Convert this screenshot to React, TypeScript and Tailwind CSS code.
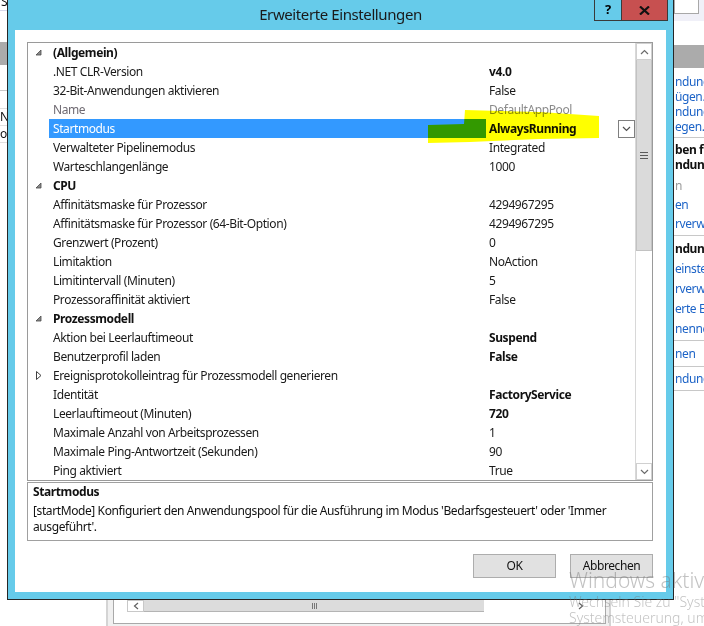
import React from 'react';

type Row =
  | { kind: 'group'; label: string }
  | { kind: 'prop'; label: string; value?: string; bold?: boolean; muted?: boolean; selected?: boolean; collapsed?: boolean };

const ROWS: Row[] = [
  { kind: 'group', label: '(Allgemein)' },
  { kind: 'prop', label: '.NET CLR-Version', value: 'v4.0', bold: true },
  { kind: 'prop', label: '32-Bit-Anwendungen aktivieren', value: 'False' },
  { kind: 'prop', label: 'Name', value: 'DefaultAppPool', muted: true },
  { kind: 'prop', label: 'Startmodus', value: 'AlwaysRunning', bold: true, selected: true },
  { kind: 'prop', label: 'Verwalteter Pipelinemodus', value: 'Integrated' },
  { kind: 'prop', label: 'Warteschlangenlänge', value: '1000' },
  { kind: 'group', label: 'CPU' },
  { kind: 'prop', label: 'Affinitätsmaske für Prozessor', value: '4294967295' },
  { kind: 'prop', label: 'Affinitätsmaske für Prozessor (64-Bit-Option)', value: '4294967295' },
  { kind: 'prop', label: 'Grenzwert (Prozent)', value: '0' },
  { kind: 'prop', label: 'Limitaktion', value: 'NoAction' },
  { kind: 'prop', label: 'Limitintervall (Minuten)', value: '5' },
  { kind: 'prop', label: 'Prozessoraffinität aktiviert', value: 'False' },
  { kind: 'group', label: 'Prozessmodell' },
  { kind: 'prop', label: 'Aktion bei Leerlauftimeout', value: 'Suspend', bold: true },
  { kind: 'prop', label: 'Benutzerprofil laden', value: 'False', bold: true },
  { kind: 'prop', label: 'Ereignisprotokolleintrag für Prozessmodell generieren', collapsed: true },
  { kind: 'prop', label: 'Identität', value: 'FactoryService', bold: true },
  { kind: 'prop', label: 'Leerlauftimeout (Minuten)', value: '720', bold: true },
  { kind: 'prop', label: 'Maximale Anzahl von Arbeitsprozessen', value: '1' },
  { kind: 'prop', label: 'Maximale Ping-Antwortzeit (Sekunden)', value: '90' },
  { kind: 'prop', label: 'Ping aktiviert', value: 'True' },
];

const RIGHT_LINKS = ['ndung', 'ügen...', 'ndung', 'egen...'];

function Expanded() {
  return (
    <svg width="7" height="7" viewBox="0 0 7 7">
      <polygon points="6,1 6,6 1,6" fill="#8a8a8a" stroke="#4a4a4a" strokeWidth="0.8" />
    </svg>
  );
}

function Collapsed() {
  return (
    <svg width="7" height="9" viewBox="0 0 7 9">
      <polygon points="1.5,0.5 6,4.5 1.5,8.5" fill="none" stroke="#404040" strokeWidth="1" />
    </svg>
  );
}

function Chevron({ up, color = '#6b6b6b' }: { up?: boolean; color?: string }) {
  return (
    <svg width="9" height="6" viewBox="0 0 9 6">
      <polyline points={up ? '1,5 4.5,1.5 8,5' : '1,1 4.5,4.5 8,1'} fill="none" stroke={color} strokeWidth="1.2" />
    </svg>
  );
}

function PropRow({ row }: { row: Row }) {
  if (row.kind === 'group') {
    return (
      <div className="flex h-[19px] items-center">
        <div className="w-[21px] flex justify-center">
          <Expanded />
        </div>
        <div className="pl-[4px] font-bold text-[#111]">{row.label}</div>
      </div>
    );
  }
  return (
    <div className="relative flex h-[19px] items-center">
      <div className="w-[21px] flex justify-center">{row.collapsed && <Collapsed />}</div>
      <div
        className={
          row.selected
            ? 'w-[437px] h-full flex items-center pl-[4px] bg-[#3399ff] text-white whitespace-nowrap'
            : row.muted
            ? 'w-[437px] pl-[4px] text-[#6f6a72] whitespace-nowrap'
            : 'w-[437px] pl-[4px] text-[#1a1a1a] whitespace-nowrap'
        }
      >
        {row.label}
      </div>
      <div
        className={
          row.muted
            ? 'flex-1 pl-[3px] text-[#8a8a8a] whitespace-nowrap'
            : row.bold
            ? 'flex-1 pl-[3px] font-bold text-[#111] whitespace-nowrap'
            : 'flex-1 pl-[3px] text-[#1a1a1a] whitespace-nowrap'
        }
      >
        {row.value}
      </div>
      {row.selected && (
        <div className="absolute right-0 top-[1px] w-[17px] h-[18px] bg-white border border-[#7f7f7f] flex items-center justify-center">
          <Chevron color="#505050" />
        </div>
      )}
    </div>
  );
}

function RightStrip() {
  return (
    <div className="absolute left-[674px] top-0 w-[40px] h-[626px] bg-white text-[12px] leading-[15px]">
      <div className="h-[21px] bg-[#f0f0f8]">
        <div className="w-[25px] h-[14px] bg-white border border-[#a8a8a8] border-t-0" />
      </div>
      <div className="mt-[24px] h-[23px] bg-[#ababab]" />
      <div className="pt-[6px] pl-[1px] text-[#1c63c7]">
        {RIGHT_LINKS.map((t, i) => (
          <div key={i} className="whitespace-nowrap">{t}</div>
        ))}
      </div>
      <div className="mt-[3px] h-px bg-[#c8c8c8]" />
      <div className="pt-[4px] pl-[1px] font-bold text-[#111] whitespace-nowrap">
        <div>ben für</div>
        <div>ndung</div>
      </div>
      <div className="pl-[1px] leading-[19px] pt-[4px]">
        <div className="text-[#9a9a9a]">n</div>
        <div className="text-[#1c63c7]">en</div>
        <div className="text-[#1c63c7]">rverw</div>
      </div>
      <div className="mt-[2px] h-px bg-[#c8c8c8]" />
      <div className="pl-[1px] leading-[20px] pt-[3px] whitespace-nowrap">
        <div className="font-bold text-[#111]">ndung</div>
        <div className="text-[#1c63c7]">einste</div>
        <div className="text-[#1c63c7]">rverw</div>
        <div className="text-[#1c63c7]">erte Ei</div>
        <div className="text-[#1c63c7]">nenne</div>
      </div>
      <div className="mt-[1px] h-px bg-[#c8c8c8]" />
      <div className="pl-[1px] leading-[25px] text-[#1c63c7]">nen</div>
      <div className="h-px bg-[#c8c8c8]" />
      <div className="pl-[1px] leading-[23px] text-[#1c63c7]">ndung</div>
      <div className="h-px bg-[#c8c8c8]" />
    </div>
  );
}

function LeftStrip() {
  return (
    <div className="absolute left-0 top-0 w-[8px] h-[626px] bg-white text-[12px] text-[#111] overflow-hidden">
      <div className="leading-[10px] -mt-[3px] pl-[1px]">S</div>
      <div className="mt-[3px] h-px bg-[#d8d8ea]" />
      <div className="mt-[31px] h-[23px] bg-[#ababab]" />
      <div className="mt-[25px] h-px bg-[#c8c8c8]" />
      <div className="mt-[17px] h-px bg-[#e0e0e0]" />
      <div className="leading-[16px]">N</div>
      <div className="h-px bg-[#e0e0e0]" />
      <div className="leading-[16px]">oo</div>
      <div className="h-px bg-[#e0e0e0]" />
    </div>
  );
}

function BottomWindow() {
  return (
    <div className="absolute left-[106px] top-[585px] w-[505px] h-[50px] bg-[#f0f0f0] border-x-2 border-[#d4d4d4]">
      <div className="ml-[5px] mr-[3px] h-[39px] bg-white border border-[#a9a9a9] border-t-0">
        <div className="pt-[15px] pl-[13px] pr-[15px] flex h-[27px]">
          <div className="w-[17px] h-[12px] bg-white border border-[#c8c8c8] flex items-center justify-center">
            <svg width="6" height="8" viewBox="0 0 6 8">
              <polyline points="5,1 1.5,4 5,7" fill="none" stroke="#606060" strokeWidth="1.2" />
            </svg>
          </div>
          <div className="w-[340px] h-[12px] bg-[#dcdcdc] border-b border-[#b4b4b4] flex justify-center items-center">
            <div className="flex gap-[1px] h-[6px]">
              <div className="w-px bg-[#777]" />
              <div className="w-px bg-[#777]" />
              <div className="w-px bg-[#777]" />
            </div>
          </div>
          <div className="flex-1 h-[12px] flex justify-end items-center pr-[6px]">
            <svg width="6" height="8" viewBox="0 0 6 8">
              <polyline points="1,1 4.5,4 1,7" fill="none" stroke="#606060" strokeWidth="1.2" />
            </svg>
          </div>
        </div>
      </div>
    </div>
  );
}

export default function App() {
  return (
    <div className="relative w-[704px] h-[626px] overflow-hidden bg-white font-['Noto_Sans',sans-serif] text-[12px] tracking-[-0.4px]">
      <LeftStrip />
      <RightStrip />
      <BottomWindow />

      <div className="absolute left-[7px] top-[-1px] w-[667px] h-[601px] border border-[#262626] bg-[#66cbea] flex flex-col">
        <div className="relative h-[30px] flex items-center justify-center text-[15px] text-[#1a1a1a]">
          <span className="mt-[-1px]">Erweiterte Einstellungen</span>
          <div className="absolute left-[586px] top-0 w-[28px] h-[21px] border border-[#3a3a3a] border-t-0 flex items-center justify-center font-bold text-[13px] text-black">
            ?
          </div>
          <div className="absolute left-[613px] top-0 w-[47px] h-[21px] bg-[#c75050] border border-[#3a3a3a] border-t-0 flex items-center justify-center">
            <svg width="11" height="9" viewBox="0 0 11 9">
              <path d="M1 0.5 L10 8.5 M10 0.5 L1 8.5" stroke="#111" strokeWidth="2.2" />
            </svg>
          </div>
        </div>

        <div className="flex-1 mx-[7px] mb-[7px] bg-white pt-[12px] pl-[12px] pr-[13px] flex flex-col">
          <div className="h-[439px] border border-[#9a9a9a] flex">
            <div className="w-[607px] flex flex-col">
              {ROWS.map((r, i) => (
                <PropRow key={i} row={r} />
              ))}
            </div>
            <div className="w-[17px] flex flex-col border-l border-[#d8d8d8]">
              <div className="h-[17px] bg-white border border-[#d0d0d0] flex items-center justify-center">
                <Chevron up />
              </div>
              <div className="h-[191px] bg-[#dadada] border-x border-b border-[#c2c2c2] flex items-center justify-center">
                <div className="flex flex-col gap-[2px]">
                  <div className="w-[8px] h-px bg-[#5a5a5a]" />
                  <div className="w-[8px] h-px bg-[#5a5a5a]" />
                  <div className="w-[8px] h-px bg-[#5a5a5a]" />
                </div>
              </div>
              <div className="flex-1 bg-white" />
              <div className="h-[17px] bg-white border border-[#d0d0d0] flex items-center justify-center">
                <Chevron />
              </div>
            </div>
          </div>

          <div className="mt-[1px] h-[59px] border border-[#a0a0a0] pl-[5px] pt-[1px] text-[#111] leading-[16px] whitespace-nowrap">
            <div className="font-bold">Startmodus</div>
            <div className="mt-[3px]">
              [startMode] Konfiguriert den Anwendungspool für die Ausführung im Modus 'Bedarfsgesteuert' oder 'Immer
              <br />
              ausgeführt'.
            </div>
          </div>

          <div className="mt-[13px] flex justify-end gap-[14px]">
            <button className="w-[83px] h-[24px] bg-[#e1e1e1] border border-[#adadad] text-[#111]">OK</button>
            <button className="w-[83px] h-[24px] bg-[#e1e1e1] border border-[#adadad] text-[#111]">Abbrechen</button>
          </div>
        </div>
      </div>

      <svg className="absolute left-0 top-0 pointer-events-none mix-blend-multiply" width="704" height="626">
        <polygon
          points="428,125 464,124 465,110 540,112 599,116 599,138 540,139 470,142 428,143"
          fill="#ffff00"
        />
      </svg>

      <div className="absolute left-[569px] top-[566px] pointer-events-none whitespace-nowrap font-light tracking-normal text-[rgba(120,120,120,0.45)]">
        <div className="text-[21px] leading-[28px]">Windows aktivieren</div>
        <div className="text-[14px] leading-[16px]">Wechseln Sie zu "System"</div>
        <div className="text-[14px] leading-[16px]">Systemsteuerung, um</div>
      </div>
    </div>
  );
}
